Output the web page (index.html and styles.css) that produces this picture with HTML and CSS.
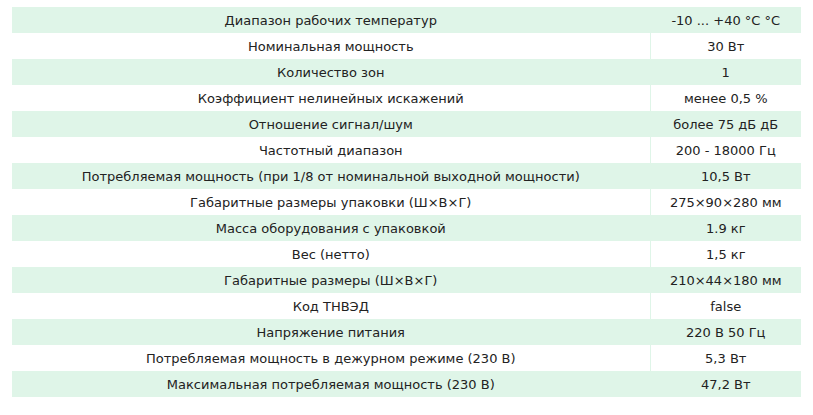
FILE: index.html
```html
<!DOCTYPE html>
<html lang="ru">
<head>
<meta charset="utf-8">
<link rel="stylesheet" href="styles.css">
</head>
<body>
<table class="specs">
<tbody>
<tr><td class="name">Диапазон рабочих температур</td><td class="val">-10 ... +40 °C °C</td></tr>
<tr><td class="name">Номинальная мощность</td><td class="val">30 Вт</td></tr>
<tr><td class="name">Количество зон</td><td class="val">1</td></tr>
<tr><td class="name">Коэффициент нелинейных искажений</td><td class="val">менее 0,5 %</td></tr>
<tr><td class="name">Отношение сигнал/шум</td><td class="val">более 75 дБ дБ</td></tr>
<tr><td class="name">Частотный диапазон</td><td class="val">200 - 18000 Гц</td></tr>
<tr><td class="name">Потребляемая мощность (при 1/8 от номинальной выходной мощности)</td><td class="val">10,5 Вт</td></tr>
<tr><td class="name">Габаритные размеры упаковки (Ш×В×Г)</td><td class="val">275×90×280 мм</td></tr>
<tr><td class="name">Масса оборудования с упаковкой</td><td class="val">1.9 кг</td></tr>
<tr><td class="name">Вес (нетто)</td><td class="val">1,5 кг</td></tr>
<tr><td class="name">Габаритные размеры (Ш×В×Г)</td><td class="val">210×44×180 мм</td></tr>
<tr><td class="name">Код ТНВЭД</td><td class="val">false</td></tr>
<tr><td class="name">Напряжение питания</td><td class="val">220 В 50 Гц</td></tr>
<tr><td class="name">Потребляемая мощность в дежурном режиме (230 В)</td><td class="val">5,3 Вт</td></tr>
<tr><td class="name">Максимальная потребляемая мощность (230 В)</td><td class="val">47,2 Вт</td></tr>
</tbody>
</table>
</body>
</html>
```
FILE: styles.css
```css
html, body {
  margin: 0;
  background: #fff;
}
body {
  padding: 7px 12px;
  font-family: "DejaVu Sans", Verdana, sans-serif;
  font-size: 13px;
  color: #222;
}
.specs {
  width: 789px;
  border-collapse: collapse;
  table-layout: fixed;
}
.specs td {
  height: 26px;
  padding: 0 4px;
  box-sizing: border-box;
  text-align: center;
  vertical-align: middle;
  border-right: 1px solid #dff5e8;
  white-space: nowrap;
}
.specs td.name {
  width: 638px;
}
.specs td.val {
  border-right: none;
}
.specs tr:nth-child(odd) td {
  background: #dff5e8;
}
```
